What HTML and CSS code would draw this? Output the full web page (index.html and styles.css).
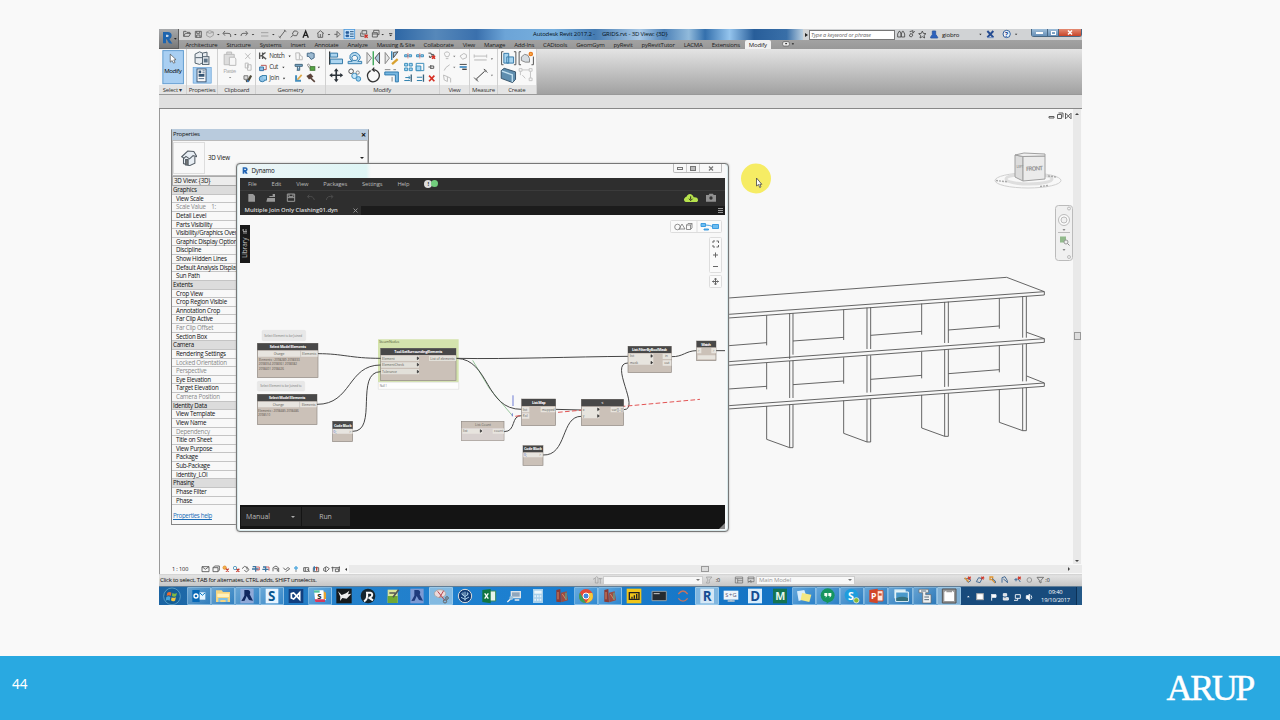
FILE: index.html
```html
<!DOCTYPE html>
<html lang="en">
<head>
<meta charset="utf-8">
<title>Slide 44</title>
<link rel="stylesheet" href="styles.css">
</head>
<body>
<main class="slide">
<section class="screen">
  <header class="app-head">
    <div class="app-button"><svg width="20" height="20" viewBox="12 12 60 58"><path d="M24 54V20h14q12 0 12 11q0 7-7 10l9 14-10-1-7-12h-2v12z" fill="#1d64ae"/><path d="M33 28h4q4 0 4 3.500t-4 3.500h-4z" fill="#c8d8e8"/><path d="M57 38h8l-4 5z" fill="#222"/></svg></div>
    <div class="head-rows">
      <div class="titlebar">
        <svg class="quick" width="216" height="11" viewBox="72 12 648 33" fill="none" stroke="#555" stroke-width="2.6">
          <path d="M86 34V19h7l3 3h8v4M86 34l5-9h16l-5 9zM121 19h18v18h-18zM125 19v6h9v-6M125 37v-7h10v7"/><path d="M164 17l11 4v10l-10 6-10-5V21zM155 21l9 4 11-4" stroke="#999"/><path d="M186 27h8l-4 4zM237 27h8l-4 4zM290 27h8l-4 4zM351 27h8l-4 4zM518 27h8l-4 4zM679 27h8l-4 4zM702 24h10v2h-10zM702 29h10l-5 5z" fill="#333" stroke="none"/>
          <path d="M210 18l-6 7 6 7M205 25h14q8 0 8 5v6M272 18l6 7-6 7M277 25h-13q-6 0-6 8"/><path d="M318 33h22M318 23h22" stroke="#999"/><path d="M374 38l16-21M371 34l6 5M387 15l7 5M407 37l8-7M417 18h8l4 5-4 9h-8l-5-5z"/><path d="M444 38l8-20 8 20M447 31h10" stroke="#222" stroke-width="4"/>
          <path d="M486 26l10-9 11 9M489 25v12h14V25M496 27v9M538 28h8M546 19l9 9-9 9z"/>
          <rect x="567" y="13" width="32" height="28" fill="#c6e2fa" stroke="#4b99dd"/><path d="M573 20h8v5h-8zM573 30h8v5h-8z" fill="#255b9a" stroke="#255b9a"/><path d="M585 20h11M585 27h11M585 34h11" stroke="#134675"/>
          <path d="M621 17h14v10h-14zM617 23v11h12M652 23v13h15V23zM656 21v-5h16v13h-5M652 27h15"/><path d="M629 29l9 9M638 29l-9 9" stroke="#d03028" stroke-width="4"/>
        </svg>
        <div class="caption"><span>Autodesk Revit 2017.2 -</span><span>GRIDS.rvt - 3D View: {3D}</span></div>
        <div class="info">
          <i class="tri-right"></i><div class="search">Type a keyword or phrase</div>
          <svg width="46" height="11" viewBox="1025 12 132 33" fill="none" stroke="#444" stroke-width="2.5"><path d="M1030 36V27l4-8h3l3 8v9zM1041 36V27l3-8h3l4 8v9zM1065 33l6 3 5-6-7-5zM1066 20l10-3-1 8M1081 18l-5 7M1104 18l3 7 8 1-6 5 2 8-7-4-7 4 2-8-6-5 8-1z"/><path d="M1134 18h10v10l6 9v2h-21v-3l5-7z" fill="#2c61bd" stroke="#2b59a2"/></svg>
          <span class="user">giobro</span>
          <svg class="help" width="44" height="11" viewBox="1270 12 132 33"><path d="M1274 26h7l-4 5zM1381 26h7l-4 5z" fill="#333"/><path d="M1298 18l18 19M1316 18l-18 19" stroke="#254c91" stroke-width="6"/><path d="M1299 38h18" stroke="#6f90c5" stroke-width="3"/><circle cx="1356" cy="27" r="11" fill="#eef4fb" stroke="#35629e" stroke-width="3"/><text x="1350" y="35" font-size="21" fill="#164890" font-weight="bold">?</text></svg>
        </div>
        <div class="winbuttons"><b class="wb-min"></b><b class="wb-max"><i></i></b><b class="wb-close"><svg width="6" height="5" viewBox="0 0 6 5"><path d="M1 .5l4 4M5 .5l-4 4" stroke="#fff" stroke-width="1.500"/></svg></b></div>
      </div>
      <nav class="tabs"><span>Architecture</span><span>Structure</span><span>Systems</span><span>Insert</span><span>Annotate</span><span>Analyze</span><span>Massing &amp; Site</span><span>Collaborate</span><span>View</span><span>Manage</span><span>Add-Ins</span><span>CADtools</span><span>GeomGym</span><span>pyRevit</span><span>pyRevitTutor</span><span>LACMA</span><span>Extensions</span><span class="active">Modify</span><svg width="13" height="8" viewBox="0 0 39 24"><rect x="2" y="5" width="20" height="13" rx="4" fill="#eee" stroke="#555" stroke-width="2"/><path d="M9 9h7l-4 5zM29 10h7l-3 5z" fill="#222"/></svg></nav>
    </div>
  </header>

  <div class="ribbon">
    <div class="panel p-select"><svg viewBox="12 76 83 108"><rect x="24" y="79" width="64" height="103" fill="#a9cff2" stroke="#5f9bd0" stroke-width="3"/><path d="M47 90v25l6-5 4 8 5-2-4-8 7-1z" fill="#fff" stroke="#444" stroke-width="2"/><text x="28" y="150" textLength="55">Modify</text></svg><label>Select ▾</label></div>
    <div class="panel p-prop"><svg viewBox="95 76 95 108"><g fill="#e9edf1" stroke="#52606c" stroke-width="3"><path d="M120 90l14-7 9 4v30l-9 5-14-4zM143 87l14-3v36l-14-3M121 101h34"/><rect x="143" y="98" width="20" height="24"/></g><path d="M147 104h12v12h-12z" fill="#607487"/><rect x="114" y="132" width="56" height="48" fill="#a9d0f2" stroke="#5b9bd6" stroke-width="2"/><rect x="126" y="136" width="28" height="40" fill="#f8f8f8" stroke="#3d5878" stroke-width="3"/><path d="M131 141h8v8h-8zM131 152h18v8h-18z" fill="#365675"/><path d="M143 142h7M143 148h7M131 166h17" stroke="#53708e" stroke-width="3"/></svg><label>Properties</label></div>
    <div class="panel p-clip"><svg viewBox="190 76 114 108" fill="none" stroke="#bbb" stroke-width="3"><path d="M209 91h31v32h-31zM217 91v-7h15v7" fill="#ddd"/><path d="M225 100h16l4 5v20h-20z" fill="#f6f6f6"/><text x="206" y="150" textLength="40" fill="#aaa" stroke="none">Paste</text><path d="M224 161h7l-4 4z" fill="#777" stroke="none"/><path d="M274 88l15 17M290 88l-16 17M274 118h9v15h-9zM281 123h11v17h-11z"/><path d="M270 157h12v11h-12z" fill="#ddd" stroke="#777"/><path d="M276 174l8-3 8-15" stroke="#4f4a39" stroke-width="7"/><path d="M280 170l4 6" stroke="#3875b7" stroke-width="5"/></svg><label>Clipboard</label></div>
    <div class="panel p-geo"><svg viewBox="304 76 208 108" fill="none" stroke-width="3"><path d="M315 86v20M324 86v20M333 86l-12 9 14 11M313 96h9" stroke="#555" stroke-width="4"/><g fill="#333"><text x="344" y="102" textLength="48">Notch</text><text x="344" y="136" textLength="28">Cut</text><text x="344" y="170" textLength="31">Join</text><path d="M403 95h7l-4 5zM384 129h7l-4 5zM386 163h7l-4 5zM492 129h7l-4 5z"/></g><path d="M315 130h12v11h-12z" fill="#8fc1e8" stroke="#3774a7"/><path d="M319 125h16v13h-8" stroke="#b55656"/><circle cx="323" cy="166" r="9" fill="#8cc0e5" stroke="#367eac"/><path d="M322 156h14v14h-7" fill="#9ed0ee" stroke="#367eac"/><path d="M425 87h11l4 9 5 2v10h-19zM436 87v20" stroke="#bbb"/><path d="M460 88h8l3-2 10 3v13l-9 5-7-9h-5z" fill="#9bb9d0" stroke="#476b89"/><path d="M423 122h22v6h-22zM430 128v11M437 128v12h-9" fill="#7bacd0" stroke="#46687c"/><path d="M461 125q0-8 7 0l6 7-6 3z" stroke="#888"/><rect x="469" y="129" width="14" height="11" fill="#56a845" stroke="#477a39"/><path d="M426 155v17h15" stroke="#448ebd" stroke-width="6"/><path d="M430 169l13-15" stroke="#dda94b" stroke-width="5"/><path d="M461 158l9-5 5 6-9 6zM470 163l13 12" fill="#633" stroke="#5c463d" stroke-width="5"/></svg><label>Geometry</label></div>
    <div class="panel p-mod"><svg viewBox="512 76 342 108" fill="none" stroke="#555" stroke-width="3"><path d="M523 83v40" stroke="#333" stroke-width="4"/><path d="M525 88h22v12h-22zM525 106h37v14h-37z" fill="#acd5f0" stroke="#3679a6"/><path d="M579 120h41v-7h-12q12-9 5-19-6-9-14-8-10 0-14 9-4 11 6 18h-12z" fill="#b5d9ef" stroke="#377eaf"/><path d="M592 110q-5-10 3-15 9-3 12 5 2 6-3 10z" fill="#f8f8f8" stroke="#377eaf"/>
      <path d="M636 86l14 17-14 17z" fill="#e8e8e8" stroke="#888"/><path d="M674 86l-14 17 14 17z" fill="#abc6da"/><path d="M655 82v43" stroke="#31a24d" stroke-width="4"/><path d="M691 86l13 17-13 17z" fill="#e8e8e8" stroke="#888"/><path d="M730 84l-14 18v-16z" fill="#a0c6e0"/><path d="M711 82v27" stroke="#287aad" stroke-width="4"/><path d="M712 121l17-15" stroke="#d9a12e" stroke-width="7"/>
      <g fill="#a7d8f5" stroke="#3f90bc"><path d="M750 93h8v6h-8zM763 93h8v6h-8zM786 93h8v6h-8zM799 93h8v6h-8zM750 119h9v8h-9zM764 119h9v8h-9zM750 133h9v8h-9zM764 133h9v8h-9z"/><path d="M785 119h23v22h-23z" fill="#f8f8f8"/><path d="M785 127h14v14h-14z"/></g><path d="M760 88v16M796 88v16" stroke="#d4433a" stroke-width="2"/><path d="M822 88h8v4h8v5h-8v4h-5v-5"/><path d="M833 96l9 9M842 96l-9 9M824 156l16 17M840 156l-16 17" stroke="#d63024" stroke-width="5"/><path d="M822 130h7M829 124v12M829 127h9v7h-9"/>
      <path d="M527 155h33M543 139v32" stroke="#2c333a" stroke-width="5"/><path d="M522 155l9-7v14zM564 155l-9-7v14zM543 134l-7 9h14zM543 176l-7-9h14z" fill="#2c333a" stroke="none"/><circle cx="588" cy="143" r="7"/><circle cx="608" cy="147" r="5" stroke="#888"/><circle cx="598" cy="157" r="8" fill="#c8e7fa" stroke="#3e8ebe"/><circle cx="610" cy="166" r="7" fill="#9cd0ef" stroke="#3e8ebe"/><path d="M647 141q-15 10-7 25 8 13 22 7 14-8 11-22-5-13-20-13l5-6M653 138l6 6" stroke="#333" stroke-width="4"/><path d="M690 145h41v30h-9v-21h-32z" fill="#79b8e1" stroke="#2e79ae"/><path d="M690 138h17M716 138h8M712 160v14" stroke="#888"/><path d="M770 153v22M807 153v22" stroke="#3a637c" stroke-width="4"/><path d="M749 171h17M752 162h13M787 161h16M787 171h16M762 158l5 4-5 4" stroke="#2d80ad"/></svg><label>Modify</label></div>
    <div class="panel p-view"><svg viewBox="854 76 92 108" fill="none" stroke="#bbb" stroke-width="3"><path d="M872 98q-10-14 4-15 13 2 4 15zM872 104h8M916 96l12-8 8 4v9l-12 5zM865 155l12 5v15l-10-5zM877 160l10 5v13M867 141l5-9 12-9"/><path d="M895 95h7l-4 5zM895 129h7l-4 5z" fill="#777" stroke="none"/><path d="M915 122h22" stroke="#444"/><path d="M915 130h22" stroke="#3182bd" stroke-width="5"/><path d="M923 137h14" stroke="#333" stroke-width="4"/></svg><label>View</label></div>
    <div class="panel p-meas"><svg viewBox="946 76 82 108" fill="none" stroke="#bbb" stroke-width="3"><path d="M959 96h39M959 91v10M998 91v10"/><path d="M959 108h39" stroke-width="5" stroke="#d0d0d0"/><path d="M1011 103h7l-4 5zM1011 154h7l-4 5z" fill="#777" stroke="none"/><path d="M965 168l29-27M959 163l12 12M989 136l11 11" stroke="#333"/><circle cx="966" cy="168" r="3" fill="#333"/><circle cx="994" cy="142" r="3" fill="#333"/></svg><label>Measure</label></div>
    <div class="panel p-create"><svg viewBox="1028 76 118 108" fill="none" stroke="#555" stroke-width="3"><path d="M1045 83h-6v40h6M1077 83h6v40h-6M1099 83h-6v40h6M1131 123h6V98"/><path d="M1046 88h15v30h-15zM1055 99h21v19h-21z" fill="#a8d5f0" stroke="#397ba9"/><path d="M1100 99l10-8 10 3 5 10v11h-13l-12-5z" fill="#d6dce1" stroke="#888"/><circle cx="1129" cy="90" r="5" fill="#f9b24f" stroke="#e87a20" stroke-width="4"/><path d="M1038 141l9-7 35 11v23l-9 10-35-13z" fill="#5f8eaf" stroke="#35536c"/><path d="M1040 143l32 11v22" stroke="#c4e2f2" stroke-width="4"/><path d="M1093 135h9v8h-9zM1124 135h9v8h-9zM1124 164h9v8h-9zM1102 139h22M1128 143v21M1097 143v12M1103 155l9 10" stroke="#c4c4c4"/></svg><label>Create</label></div>
  </div>
  <div class="option-strip"></div>

  <div class="workarea">
    <svg class="model" viewBox="160 109 913 455" width="913" height="455">
      <g fill="none" stroke="#606060" stroke-width="1"><path d="M1049 116.500h5v1.500h-5zM1057.500 114.500h4v4h-4zM1058.500 113h4.500v4.500M1066 113.500l4.500 5M1070.500 113.500l-4.500 5M1065.500 113v6M1071 113v6"/></g>
      <g transform="translate(720 270) scale(.333333)" fill="none" stroke="#555" stroke-width="2.7">
        <path d="M26 84L860 22 973 65V75L26 144M26 133L973 65M26 275L973 206V217L26 286M920 187L973 206M26 407L973 339V349L26 417M920 318L973 339"/>
        <path d="M140 136V226M26 227L140 218M209 131V267M219 130V254M371 119V210M219 213L371 202M441 113V237M452 112V237M605 101V194M452 196L605 184M674 96V219M685 95V219M838 85V176M685 180L838 168M908 80V203M919 79V203"/>
        <path d="M140 279V358M26 357L140 349M209 273V384M219 272V384M371 262V341M219 344L371 333M441 257V368M452 256V367M605 245V325M452 328L605 316M674 239V351M685 238V350M838 227V307M685 311L838 299M908 223V334M919 222V334"/>
        <path d="M140 408V508L209 533H219V404M209 404V533M371 392V490L441 516H452V387M441 388V516M605 375V474L674 499H685V370M674 371V499M838 359V457L908 482H919V353M908 354V482"/>
      </g>
      <g fill="none" stroke="#d0d0d0"><ellipse cx="1028" cy="180.500" rx="33" ry="7.500" stroke-width="1"/><ellipse cx="1029" cy="179" rx="23" ry="5" stroke="#dedede" stroke-width="3"/><path d="M996 180.500l12 1.500M1048 176l9 1M1040 186.500l8-1" stroke="#aaa" stroke-dasharray="2 1" stroke-width="1.500"/></g>
      <g stroke="#a0a0a0" stroke-width="1"><path d="M1015 155l8 1.500V181l-8-4z" fill="#dcdcdc"/><path d="M1023 156.500l22-.5v23l-22 2z" fill="#ebebeb"/><path d="M1015 155l9-2 21 1v2l-22 .5z" fill="#f0f0f0"/></g>
      <text x="1026" y="170.500" class="cube" textLength="17" transform="rotate(-3 1034 169)">FRONT</text><text x="1016.500" y="168" class="cube small">LEFT</text>
      <g fill="#f0f0f0" stroke="#bbb"><rect x="1055.500" y="205.500" width="17" height="55" rx="3"/><circle cx="1064" cy="220" r="5.500" fill="#fafafa"/><circle cx="1064" cy="220" r="3"/><circle cx="1069" cy="208.500" r="1.500"/><circle cx="1069" cy="257" r="1.500"/><path d="M1058 232.500h12"/></g><path d="M1060 236.500h6v6h-6z" fill="#91b98b"/><circle cx="1066" cy="242" r="2" fill="#eee" stroke="#888" stroke-width=".8"/><path d="M1067.500 243.500l2 2" stroke="#888"/><path d="M1062.500 229h3l-1.500 2zM1062.500 249h3l-1.500 2z" fill="#888"/>
      <circle cx="756" cy="178.500" r="15" fill="#f6ec64"/><path d="M756.500 178v8l2-1.500 1.200 3 1.300-.7-1.200-2.500h2z" fill="#fff" stroke="#444" stroke-width=".8"/>
    </svg>
    <div class="vscroll"><i class="up"></i><i class="thumb"></i><i class="down"></i></div>

    <aside class="palette">
      <div class="pal-head"><span>Properties</span><b>×</b></div>
      <div class="pal-type"><div class="thumb-box"><svg width="16" height="16" viewBox="50 75 45 45" fill="#e8eef4" stroke="#555e66" stroke-width="3"><path d="M57 96v17l17 6 15-7V94"/><path d="M52 94l17-16 17 1 9 15-11-3-10 9-10-7-5 5z"/><path d="M63 102h7v15h-7z" fill="#777"/></svg></div><span>3D View</span><i></i></div>
      <div class="pal-sel">3D View: {3D}</div>
      <ul class="rows"><li class="group">Graphics</li><li>View Scale</li><li class="off">Scale Value&nbsp; &nbsp; 1:</li><li>Detail Level</li><li>Parts Visibility</li><li>Visibility/Graphics Over</li><li>Graphic Display Options</li><li>Discipline</li><li>Show Hidden Lines</li><li>Default Analysis Display</li><li>Sun Path</li><li class="group">Extents</li><li>Crop View</li><li>Crop Region Visible</li><li>Annotation Crop</li><li>Far Clip Active</li><li class="off">Far Clip Offset</li><li>Section Box</li><li class="group">Camera</li><li>Rendering Settings</li><li class="off">Locked Orientation</li><li class="off">Perspective</li><li>Eye Elevation</li><li>Target Elevation</li><li class="off">Camera Position</li><li class="group">Identity Data</li><li>View Template</li><li>View Name</li><li class="off">Dependency</li><li>Title on Sheet</li><li>View Purpose</li><li>Package</li><li>Sub-Package</li><li>Identity_LOI</li><li class="group">Phasing</li><li>Phase Filter</li><li>Phase</li></ul>
      <a class="pal-help">Properties help</a>
    </aside>

    <section class="dynamo">
      <div class="dy-title"><svg width="6" height="7" viewBox="0 0 18 21"><path d="M2 20V1h8q7 0 7 6 0 4-4 6l4 7h-6l-4-6v6z" fill="#2265b4"/><path d="M7 5h3q2 0 2 2t-2 2H7z" fill="#fff"/></svg><span>Dynamo</span>
        <div class="dy-win"><i><u class="m"></u></i><i><u class="r"></u></i><i><svg width="6" height="5" viewBox="0 0 6 5"><path d="M1 .5l4 4M5 .5l-4 4" stroke="#777" stroke-width="1.300"/></svg></i></div></div>
      <div class="dy-body">
        <div class="dy-menu"><span>File</span><span>Edit</span><span>View</span><span>Packages</span><span>Settings</span><span>Help</span><b>!</b><em></em></div>
        <div class="dy-tools"><svg width="485" height="15" viewBox="15 92 1455 45"><path d="M40 101h14l6 6v17H40zM97 113h23v11H94zM103 107h10v-6h7v9h-17z" fill="#999"/><path d="M157 101h22v22h-22zM162 101v8h12v-8M157 112h22" fill="none" stroke="#999" stroke-width="3"/><path d="M223 103l-6 6 6 5M218 109q17-4 20 10M288 103l6 6-6 5M293 109q-17-4-19 10" fill="none" stroke="#4b4b4b" stroke-width="3"/><path d="M1350 124q-7-6 1-13 5-2 6-6 9-8 17 1l2 5q14-1 13 10l-3 4h-33z" fill="#b7e34d"/><path d="M1367 108v10M1362 115l5 6 6-6" stroke="#303018" stroke-width="3" fill="none"/><path d="M1413 104h8l2-4h11l2 4h7v20h-30z" fill="#909090"/><circle cx="1428" cy="113" r="5" fill="#333"/></svg></div>
        <div class="dy-tabs"><div class="dy-tab"><span>Multiple Join Only Clashing01.dyn</span><svg width="5" height="5" viewBox="0 0 5 5"><path d="M.5 .5l4 4M4.500 .5l-4 4" stroke="#999" stroke-width=".9"/></svg></div><i></i></div>
        <div class="dy-space">
          <svg class="graph" width="485" height="290" viewBox="240 215 485 290">
            <g fill="#fafafa" stroke="#ddd"><rect x="670.500" y="220.500" width="51" height="12" rx="1"/><rect x="709.500" y="237.500" width="12" height="35" rx="1"/><rect x="709.500" y="275.500" width="12" height="12" rx="1"/><path d="M697 221v11"/></g>
            <g fill="none" stroke="#777" stroke-width=".8"><circle cx="677.500" cy="227" r="2.800"/><path d="M679 229l3-5 3 5zM686.500 225h4v4.500h-4zM686.500 225l1.500-1.500h4v4.500l-1.500 1.500M690.500 225l1.500-1.500"/></g>
            <g fill="#6fbdf0" stroke="#3095df" stroke-width=".9"><path d="M701 223.500h4.500v3h-4.500zM712.500 224.500h6v4h-6zM704 229h4.500v1h-4.500z"/><path d="M705.500 225q4 0 7 1.500" fill="none"/></g>
            <path d="M713 243v-2h2M716.500 241h2v2M718.500 245v2h-2M715 247h-2v-2M713 255h5M715.500 252.500v5M713 266.500h5M712.500 281.500h6M715.500 278.500v6M714.500 279.500l1-1.500 1 1.500M714.500 283.500l1 1.500 1-1.500M713.500 280.500l-1 1 1 1M717.500 280.500l1 1-1 1" fill="none" stroke="#666"/>
            <g transform="translate(250 325) scale(.333333)">
              <g class="note"><rect x="36" y="16" width="131" height="31" rx="4"/><rect x="22" y="169" width="142" height="29" rx="4"/></g>
              <g class="tiny"><text x="43" y="35" textLength="113">Select Element to be Joined</text><text x="31" y="187" textLength="124">Select Element to be Joined to</text></g>
              <g class="node"><rect x="22" y="55" width="182" height="103"/><rect x="22" y="208" width="179" height="91"/><rect x="248" y="289" width="60" height="61"/></g>
              <path d="M22 55h182v21H22zM22 208h179v21H22zM248 289h60v22h-60z" fill="#484848"/>
              <path d="M24 77h128v18H24zM24 230h125v17H24zM153 77h50v18h-50zM150 230h50v17h-50zM248 312h60v14h-60z" fill="#e7e4df"/><path d="M152 77v18M149 230v17" stroke="#aaa"/>
              <g class="head"><text x="59" y="70" textLength="109">Select Model Elements</text><text x="57" y="223" textLength="109">Select Model Elements</text><text x="252" y="305" textLength="53">Code Block</text></g>
              <g class="port"><text x="71" y="91" textLength="32">Change</text><text x="68" y="243" textLength="34">Change</text><text x="156" y="90" textLength="43">Elements</text><text x="155" y="243" textLength="42">Elements</text></g><text x="250" y="323" font-size="11" fill="#4d6dc4">0;</text><text x="298" y="323" font-size="11" fill="#555">&gt;</text>
              <g class="tiny dark"><text x="26" y="108" textLength="123">Elements : 2098289 2098333</text><text x="26" y="121" textLength="115">2098354 2098361 2098382</text><text x="26" y="134" textLength="76">2098401 2098426</text><text x="24" y="261" textLength="122">Elements : 2098485 2098486</text><text x="24" y="274" textLength="37">2098510</text></g>
              <path d="M384 43h242v129H384z" fill="#d4e3ad"/><path d="M385 172h241v21H385z" fill="#fdfdfd" stroke="#e0e0e0" stroke-width="2"/><text x="387" y="53" font-size="11" fill="#59643f" textLength="61">SteamNodes</text><text class="tiny" x="389" y="186" textLength="22">Null 1</text>
              <rect x="392" y="70" width="226" height="97" class="node"/><path d="M392 70h226v20H392z" fill="#484848"/><path d="M393 92h114v16H393zM393 112h114v16H393zM393 132h114v16H393zM537 92h81v16h-81z" fill="#e2e0d9"/><text class="headone" x="433" y="84" textLength="144">Tool.GetSurroundingElements</text>
              <g class="port"><text x="396" y="104" textLength="38">Element</text><text x="396" y="123" textLength="66">ElementCheck</text><text x="396" y="143" textLength="45">Tolerance</text><text x="541" y="104" textLength="73">List of elements</text></g><path d="M502 96l5 4-5 4zM502 115l5 4-5 4zM502 136l5 4-5 4z" fill="#333" stroke="#333" stroke-width="2"/>
              <path class="wire" d="M204 86C280 86 300 100 392 100M201 238C306 238 292 120 392 120M308 319C385 320 313 141 392 140"/>
            </g>
            <g transform="translate(450 335) scale(.333333)">
              <path d="M68 76L118 160 188 243" fill="none" stroke="#6ab06f" stroke-width="2"/><path d="M189 181v32M187 235v9" stroke="#6d7bd5" stroke-width="3"/>
              <path class="wire" d="M20 70C120 74 104 224 215 223M20 70C180 73 370 65 534 64M162 290C200 290 181 241 215 242M316 223L394 225M279 360C352 363 332 243 394 244M521 224C574 224 475 84 534 84M664 65C700 66 707 47 740 47M798 47H830"/>
              <path d="M196 244L215 241M324 232L750 193" stroke="#e25353" stroke-width="3" stroke-dasharray="14 7"/>
              <g class="node"><rect x="34" y="259" width="128" height="58"/><rect x="215" y="192" width="102" height="80"/><rect x="394" y="193" width="127" height="79"/><rect x="219" y="332" width="60" height="59"/><rect x="534" y="34" width="130" height="79"/><rect x="740" y="18" width="58" height="59"/></g><path d="M35 279h126v37H35z" fill="#d8d1cf"/>
              <path d="M215 192h102v21H215zM394 193h127v21H394zM219 332h60v20h-60zM534 34h130v20H534zM740 18h58v19h-58z" fill="#484848"/>
              <path d="M37 281h60v15H37zM128 281h34v15h-34zM216 216h22v16h-22zM216 235h22v16h-22zM272 216h44v16h-44zM396 216h52v34h-52zM482 216h39v16h-39zM220 353h58v14h-58zM536 56h74v33h-74zM638 56h26v16h-26zM638 76h26v16h-26zM741 39h13v16h-13zM784 39h14v16h-14zM743 61h53v12h-53z" fill="#e7e4de"/>
              <g class="head"><text x="246" y="207" textLength="41">List.Map</text><text x="454" y="206">&lt;</text><text x="222" y="346" textLength="54">Code Block</text><text x="546" y="49" textLength="105">List.FilterByBoolMask</text><text x="754" y="32" textLength="29">Watch</text></g>
              <g class="port"><text x="75" y="273" textLength="48">List.Count</text><text x="39" y="292">list</text><text x="132" y="292" textLength="28">count</text><text x="218" y="227">list</text><text x="218" y="246" textLength="15">f(x)</text><text x="275" y="227" textLength="39">mapped</text><text x="398" y="227">x</text><text x="398" y="246">y</text><text x="485" y="227" textLength="34">var[]..[]</text><text x="539" y="67">list</text><text x="539" y="87" textLength="25">mask</text><text x="645" y="67">in</text><text x="643" y="87">out</text><text x="743" y="50">&gt;</text><text x="788" y="50">&gt;</text><text x="268" y="363">&gt;</text></g><text x="221" y="363" font-size="11" fill="#4d6dc4">0;</text>
              <path d="M91 284l5 4-5 4zM443 219l5 4-5 4zM443 239l5 4-5 4zM603 59l5 4-5 4zM603 79l5 4-5 4z" fill="#333" stroke="#333" stroke-width="2"/>
            </g>
          </svg>
          <div class="library"><span>Library</span><svg width="8" height="5" viewBox="0 0 8 5"><path d="M2 1h4M2 2.500h4M2 4h2M5 3l1.500 1L5 5" stroke="#ccc" stroke-width=".7" fill="none"/></svg></div>
        </div>
        <div class="dy-run"><div class="mode"><span>Manual</span><i></i></div><div class="run">Run</div><svg width="6" height="6" viewBox="0 0 6 6"><path d="M0 6L6 0v6z" fill="#888"/></svg></div>
      </div>
    </section>
  </div>

  <div class="viewbar"><span>1 : 100</span>
    <svg width="150" height="10" viewBox="120 9 450 30" fill="none" stroke="#555" stroke-width="2.600"><path d="M129 17h21v15h-21zM129 17l10 8 11-8M162 20h15v12h-15zM162 20l5-5h14v12l-4 5"/><circle cx="197" cy="20" r="5" fill="#f4b44b" stroke="#e28b2d"/><path d="M201 23l8 9M209 23l-8 9M232 23l9 9M241 23l-9 9" stroke="#c43a2d" stroke-width="4"/><circle cx="228" cy="21" r="5" stroke="#4b94bb"/><path d="M249 23l8-7 8 4 5 6-8 7-6-6M264 17v9M373 20l6 7 8-8 5 5-12 8"/><path d="M281 17h9v15M279 24h20M312 18h8v14M310 25h19" stroke="#3c75a1" stroke-width="4"/><path d="M292 18h9v9h-9M321 18h9v11" stroke="#c55"/><path d="M342 31V20l9-5 8 6v12M346 23h9v8"/><path d="M411 26v7" stroke="#777"/><circle cx="411" cy="21" r="4" fill="#7cc4ee" stroke="#45a0d8"/><path d="M434 20h15v11h-15zM439 20v11M445 24l7 8M463 20h16v12h-16zM494 22l8-5 9 6-9 9-8-3zM500 18v14M521 17v15M517 20h26M541 16v16M529 24h10v8h-10z"/><path d="M466 16v13" stroke="#347ab4" stroke-width="4"/><path d="M473 17v12" stroke="#bd4338" stroke-width="4"/><path d="M564 21v9l-6-5z" fill="#333" stroke="none"/></svg>
    <div class="hscroll"><i></i><b></b></div></div>
  <div class="status"><p>Click to select, TAB for alternates, CTRL adds, SHIFT unselects.</p>
    <svg width="11" height="10" viewBox="0 0 33 30" fill="none" stroke="#999" stroke-width="2"><path d="M10 8v16h8V8q-4-6-8 0zM3 13l6-3M25 26V11h-5M22 11h9"/></svg><div class="box b1"><i></i></div>
    <svg width="31" height="10" viewBox="343 46 93 30"><path d="M353 52h17l-8 9v9h-9l5-9z" fill="#d6d6d6" stroke="#999" stroke-width="2"/><text x="381" y="67" font-size="16" fill="#222">:0</text></svg>
    <svg width="21" height="10" viewBox="425 46 63 30" fill="none" stroke="#666" stroke-width="2"><path d="M429 52h22v18h-22zM429 57h22M436 57v13M436 63h15M467 52h18v14h-18zM467 57h18M466 69l10-7v8"/></svg><div class="box b2">Main Model<i></i></div>
    <svg class="sel" width="92" height="10" viewBox="1116 46 276 30" fill="none" stroke="#496f98" stroke-width="3"><path d="M1123 57h12l8 5-8 6-6-5M1159 66l7-12 10 3-6 12zM1236 69V54l9-3 7 12v7M1273 60h10M1278 55v10M1284 57l7 10"/><path d="M1134 51l8 8M1142 51l-8 8M1174 51l8 8M1182 51l-8 8M1284 51l8 8M1292 51l-8 8" stroke="#d23b2c" stroke-width="4"/><path d="M1124 54l12 12M1200 52h8v8h-8zM1207 61l9 9" stroke="#e19532" stroke-width="4"/><path d="M1206 57l10 7v6M1240 58l13 10"/><circle cx="1318" cy="61" r="7" stroke="#999"/><path d="M1341 53h20l-8 9v8l-5-3v-5z" stroke="#777"/><text x="1366" y="67" font-size="16" fill="#222" stroke="none">:0</text></svg>
  </div>

  <footer class="taskbar">
    <div class="start"><svg width="20" height="19" viewBox="0 0 60 57"><circle cx="30" cy="28" r="25" fill="#145d96" stroke="#72b5d4" stroke-width="2"/><path d="M16 17q7-4 12 0l-2 10q-6-4-12 0z" fill="#e96b31"/><path d="M31 18q7 4 14 0l-3 10q-6 3-12-1z" fill="#80b941"/><path d="M13 30q7-4 12 0l-2 11q-6-4-12 0z" fill="#45a7dd"/><path d="M29 31q6 3 13 0l-3 10q-7 4-12-1z" fill="#f5c43d"/></svg></div>
    <div class="tasks">
      <i class="open"><svg viewBox="0 0 48 48"><path d="M4 6h22v36H4z" fill="#0768b6"/><path d="M26 13h17v22H26z" fill="#e7f5ff"/><path d="M27 15l7 7 8-7" stroke="#0879c5" stroke-width="3" fill="none"/><circle cx="15" cy="24" r="6" fill="none" stroke="#fff" stroke-width="4"/></svg></i>
      <i class="open"><svg viewBox="0 0 48 48"><path d="M3 7h17l4 5h21v30H3z" fill="#f5d580"/><path d="M7 17h35v10H7z" fill="#fff2bb"/><path d="M10 42V30h28v12h-6v-6H16v6z" fill="#7fc1e5"/></svg></i>
      <i class="open"><svg viewBox="0 0 48 48"><path d="M4 2h40v44H4z" fill="#8fa9d8"/><path d="M16 6h12q9 4 4 13l10 19-12-2-7-12-6 14-10 1 9-16z" fill="#10275f"/></svg></i>
      <i class="open"><svg viewBox="0 0 48 48"><path d="M5 2h38v44H5z" fill="#e7f4ff"/><text x="12" y="39" class="ico" fill="#07558e">S</text></svg></i>
      <i><svg viewBox="0 0 48 48"><path d="M2 3h44v42H2z" fill="#123f7e"/><path d="M10 17l7-2 18 19V14L17 33l-7-3z" fill="none" stroke="#fff" stroke-width="5"/></svg></i>
      <i class="open"><svg viewBox="0 0 48 48"><path d="M6 7h28l8 29-32 6z" fill="#fff"/><path d="M6 7h17v7H6z" fill="#51c1a1"/><path d="M35 10l7 4v19h-7z" fill="#e7a230"/><path d="M8 34h31v8H10z" fill="#d6395c"/><text x="16" y="32" font-size="26" font-weight="bold" fill="#333">s</text></svg></i>
      <i><svg viewBox="0 0 48 48"><path d="M1 2h46v44H1z" fill="#171b1d"/><path d="M6 10l11 11 13-5 10-8-4 11 10-2-14 15-13-2-7 9 1-13z" fill="#eee"/></svg></i>
      <i><svg viewBox="0 0 48 48"><circle cx="24" cy="24" r="22" fill="#15252e"/><path d="M12 40q12-6 9-26h10q9 3 4 11-4 5-10 4M27 29l12 8" fill="none" stroke="#f7f7f7" stroke-width="6"/></svg></i>
      <i><svg viewBox="0 0 48 48"><path d="M8 5h30v40H8z" fill="#dbe49a"/><path d="M8 24h30v21H8z" fill="#71a934"/><path d="M13 15h18M24 28l17-23" stroke="#555" stroke-width="5"/></svg></i>
      <i><svg viewBox="0 0 48 48"><path d="M4 2h40v44H4z" fill="#7c9ad4"/><path d="M16 6h12q9 4 4 13l10 19-12-2-7-12-6 14-10 1 9-16z" fill="#1f3b7c"/></svg></i>
      <i class="open hot"><svg viewBox="0 0 48 48"><ellipse cx="21" cy="17" rx="17" ry="12" fill="#ecd9da" stroke="#aaa" stroke-width="3"/><path d="M14 10l22 28M32 8L20 28" stroke="#b5454e" stroke-width="3"/><circle cx="36" cy="40" r="5" fill="none" stroke="#666" stroke-width="3"/><circle cx="42" cy="30" r="4" fill="none" stroke="#666" stroke-width="3"/></svg></i>
      <i><svg viewBox="0 0 48 48"><circle cx="24" cy="24" r="20" fill="#123c75" stroke="#ddd" stroke-width="3"/><path d="M24 38V11M13 17l11 9 11-9M12 28l12 6 12-7M18 13v9M31 13v9" stroke="#abcfe8" stroke-width="3" fill="none"/></svg></i>
      <i><svg viewBox="0 0 48 48"><path d="M26 9h18v30H26z" fill="#e8f3eb" stroke="#39895a" stroke-width="3"/><path d="M4 6l25-3v43L4 42z" fill="#117641"/><path d="M11 16l11 16M22 16L11 32" stroke="#fff" stroke-width="4"/></svg></i>
      <i><svg viewBox="0 0 48 48"><path d="M14 9h31v22H14z" fill="#dbe3e9"/><path d="M18 13h23v13H18z" fill="#8ea6bd"/><circle cx="16" cy="30" r="6" fill="#9cc3dd"/><path d="M4 42l9-8M26 36h14" stroke="#eee" stroke-width="4"/></svg></i>
      <i><svg viewBox="0 0 48 48"><path d="M9 3h30v42H9z" fill="#a9d0ea"/><path d="M13 8h22v9H13z" fill="#edf7fb"/><path d="M13 25h22M13 35h22" stroke="#e2f0fb" stroke-width="6" stroke-dasharray="5 3"/></svg></i>
      <i><svg viewBox="0 0 48 48"><path d="M7 6l12-3 2 40-14-2z" fill="#8a3b36"/><path d="M21 14l17-4 4 27-20 6z" fill="#9d4c41"/><path d="M12 12v22M25 18l12 18" stroke="#d08a67" stroke-width="3"/><path d="M36 14v20" stroke="#5ca48f" stroke-width="4"/></svg></i>
      <i class="open"><svg viewBox="0 0 48 48"><circle cx="24" cy="24" r="21" fill="#e24a37"/><path d="M6 14l10 18 8 13Q3 45 3 24q0-6 3-10z" fill="#37a458"/><path d="M43 15q8 25-19 30l11-17-5-13z" fill="#f4ca3c"/><circle cx="24" cy="24" r="9" fill="#4289de" stroke="#fff" stroke-width="3"/></svg></i>
      <i class="open"><svg viewBox="0 0 48 48"><path d="M7 6l12-3 2 40-14-2z" fill="#8a3b36"/><path d="M21 14l17-4 4 27-20 6z" fill="#9d4c41"/><path d="M12 12v22M25 18l12 18" stroke="#d08a67" stroke-width="3"/><path d="M36 14v20" stroke="#5ca48f" stroke-width="4"/></svg></i>
      <i><svg viewBox="0 0 48 48"><path d="M2 2h44v44H2z" fill="#f1c61a"/><path d="M10 14h29v20H10z" fill="none" stroke="#222" stroke-width="4"/><path d="M18 32v-6M25 32V22M32 32V18" stroke="#222" stroke-width="4"/></svg></i>
      <i><svg viewBox="0 0 48 48"><path d="M3 10h43v28H3z" fill="#252b30" stroke="#919da4" stroke-width="3"/><path d="M8 17h18" stroke="#ccc" stroke-width="3"/></svg></i>
      <i><svg viewBox="0 0 48 48"><path d="M10 18q14-18 28 0M10 31q14 17 28 0" stroke="#c8745d" stroke-width="4" fill="none"/></svg></i>
      <i class="open hot"><svg viewBox="0 0 48 48"><path d="M4 2h41v44H4z" fill="#d5e7f5"/><text x="11" y="39" class="ico" fill="#174f94">R</text></svg></i>
      <i><svg viewBox="0 0 48 48"><path d="M2 8h44v27H2z" fill="#eef4fa"/><text x="7" y="27" font-size="17" fill="#557" textLength="34">S+G</text><path d="M14 39h21M24 34v6" stroke="#c1c9d1" stroke-width="4"/></svg></i>
      <i><svg viewBox="0 0 48 48"><path d="M3 2h42v44H3z" fill="#d8edfc"/><text x="10" y="39" class="ico" fill="#154c91">D</text></svg></i>
      <i><svg viewBox="0 0 48 48"><path d="M3 2h42v44H3z" fill="#157451"/><text x="10" y="36" class="ico sm" fill="#e3f6ed">M</text></svg></i>
      <i class="open"><svg viewBox="0 0 48 48"><path d="M3 10l22-4 8 25-25 8z" fill="#d8edfb"/><path d="M18 15l28 5-6 22-26-6z" fill="#f3e882"/></svg></i>
      <i class="open"><svg viewBox="0 0 48 48"><circle cx="23" cy="22" r="21" fill="#169560"/><path d="M20 40v8l14-12z" fill="#169560"/><path d="M13 15h9v8l-5 6v-5h-4zM25 15h9v8l-5 6v-5h-4z" fill="#f4fff8"/></svg></i>
      <i class="open"><svg viewBox="0 0 48 48"><circle cx="22" cy="22" r="20" fill="#1e9ddd"/><text x="12" y="35" class="ico sm" fill="#fff">S</text><circle cx="37" cy="37" r="8" fill="#89b936" stroke="#fff" stroke-width="2"/></svg></i>
      <i class="open"><svg viewBox="0 0 48 48"><path d="M23 8h22v31H23z" fill="#ffe7dd" stroke="#d34e2e" stroke-width="3"/><path d="M32 16h9v7h-9z" fill="#d34e2e"/><path d="M4 6l25-4v44L4 42z" fill="#d24629"/><text x="9" y="33" font-size="26" font-weight="bold" fill="#fff">P</text></svg></i>
      <i class="open"><svg viewBox="0 0 48 48"><path d="M4 4h34v27H4z" fill="#d9edf4"/><path d="M8 12h38v28H8z" fill="#4a99ca" stroke="#eef8fa" stroke-width="3"/><path d="M10 30q18-8 35 0v9H10z" fill="#35707c"/></svg></i>
      <i class="open"><svg viewBox="0 0 48 48"><path d="M6 4h28v10h-8v6h16v25H17V14H6z" fill="#eef1f2" stroke="#666" stroke-width="2"/><path d="M22 27h14M22 35h14M12 9h16" stroke="#596d7c" stroke-width="3"/></svg></i>
      <i class="open hot"><svg viewBox="0 0 48 48"><path d="M4 3h41v42H4z" fill="#999" stroke="#555" stroke-width="3"/><path d="M10 12l6-4v5h17V8l6 5v26H10z" fill="#fff"/></svg></i>
    </div>
    <div class="tray"><svg width="74" height="19" viewBox="1113 77 222 57" fill="none" stroke="#e7edf3" stroke-width="3"><path d="M1131 108h8l-4-5z" fill="#fff" stroke="none"/><rect x="1160" y="97" width="20" height="18" fill="#fff" stroke="#aaa"/><path d="M1205 98v20M1206 100h12v8h-12" fill="#fff"/><path d="M1240 97h10v7h-10zM1247 109h8v7h-15v-8" fill="#ddd"/><path d="M1276 100h15v11h-15zM1272 117h11v-7"/><path d="M1309 103h5l5-5v20l-5-6h-5z" fill="#fff"/><path d="M1323 102q5 6 0 11"/></svg><div class="clock"><span>09:40</span><span>19/10/2017</span></div><i class="peek"></i></div>
  </footer>
</section>
</main>
<footer class="brandbar"><span class="page">44</span><span class="brand">ARUP</span></footer>
</body>
</html>
```
FILE: styles.css
```css
* { box-sizing: border-box; }
body { margin: 0; width: 1280px; height: 720px; overflow: hidden; background: #f9f9f9; font-family: "Open Sans", "Noto Sans", sans-serif; color: #111; }
svg { display: block; flex: none; }
i, em { font-style: normal; }
.slide { height: 656px; padding: 29px 198px 0 159px; }
.brandbar { height: 64px; background: #29a9e1; color: #fff; display: flex; justify-content: space-between; align-items: center; padding: 0 27px 0 12px; }
.page { font-size: 13.500px; line-height: 16px; padding-bottom: 8px; letter-spacing: .1px; font-family: "Noto Sans", sans-serif; }
.brand { font-family: "Liberation Serif", serif; font-size: 36px; line-height: 40px; letter-spacing: -2.400px; -webkit-text-stroke: .5px #fff; }
.screen { width: 923px; height: 576px; display: flex; flex-direction: column; background: #f8f8f8; font-size: 6.2px; line-height: 8px; }

.app-head { display: flex; height: 20px; }
.app-button { width: 20px; height: 20px; background: linear-gradient(#a8aaac, #777); border: solid #5e5e5e; border-width: 0 1px 1px 0; }
.head-rows { flex: 1; }
.titlebar { height: 11px; display: flex; background: #cfd0d1; }
.quick { background: #d6d6d6; }
.caption { width: 408px; padding-left: 138px; display: flex; gap: 7px; line-height: 11px; font-size: 6px; letter-spacing: -.15px; white-space: nowrap; color: #061220; background: linear-gradient(90deg, #2e67a5, #5688ba 10%, #3a70ad 20%, #6ca4d7 27%, #78b0de 39%, #447bb2 49%, #a8c8e5 60%, #4d82b8 66%, #91badb 72%, #3470ad 76%, #94c4ed 82%, #285e9a 88%, #396fa8 96%, #b8cee0); }
.info { width: 228px; display: flex; align-items: center; background: #d1d3d5; }
.tri-right { margin-left: 2px; border: solid transparent; border-width: 2px 0 2px 3px; border-left-color: #222; }
.search { width: 86px; height: 10px; margin-left: 1px; border: 1px solid #777; background: #fff; padding-left: 1px; font-style: italic; font-size: 5.500px; letter-spacing: -.1px; line-height: 8px; color: #666; white-space: nowrap; }
.user { width: 37px; padding-left: 1px; font-size: 6px; letter-spacing: -.15px; }
.winbuttons { display: flex; height: 8px; margin-left: auto; width: 51px; border: 1px solid #486783; border-top: 0; border-radius: 0 0 3px 3px; }
.winbuttons b { display: flex; justify-content: center; align-items: center; }
.wb-min, .wb-max { background: linear-gradient(#a0bed8, #6790b8); border-right: 1px solid #486783; }
.wb-min { width: 16px; } .wb-max { width: 11px; } .wb-close { flex: 1; background: linear-gradient(#e48b73, #c74327); }
.wb-min::before { content: ""; width: 7px; height: 2px; background: #fff; }
.wb-max i { width: 5px; height: 4px; border: 1px solid #fff; }
.tabs { height: 9px; background: linear-gradient(#a2a2a2, #989898); display: flex; gap: 9px; padding-left: 6.5px; font-size: 6px; line-height: 10px; letter-spacing: -.2px; color: #1c1c1c; white-space: nowrap; }
.tabs .active { background: #f1f1f1; padding: 0 4px; margin: 0 -4px; border-radius: 2px 2px 0 0; }
.tabs svg { margin-left: 6px; }

.ribbon { height: 46px; display: flex; background: linear-gradient(#e4e4e4, #a1a1a1); border-bottom: 1px solid #999; }
.panel { display: flex; flex-direction: column; background: #f8f8f8; border-right: 1px solid #d0d0d0; }
.panel svg { width: 100%; height: 36px; font-size: 19px; }
.panel label { height: 9px; text-align: center; background: #e4e4e4; line-height: 10px; font-size: 6px; letter-spacing: -.25px; color: #333; white-space: nowrap; }
.p-select { width: 27.67px; } .p-prop { width: 31.67px; } .p-clip { width: 38px; } .p-geo { width: 69.33px; }
.p-mod { width: 114px; } .p-view { width: 30.67px; } .p-meas { width: 27.33px; } .p-create { width: 39.33px; }
.option-strip { height: 14px; background: #e0e0e0; border-bottom: 1px solid #888; }

.workarea { height: 455px; position: relative; display: flex; border-left: 1px solid #999; background: #f8f8f8; }
.cube { font: bold 6px "Open Sans", sans-serif; fill: #999; }
.cube.small { font-size: 3px; }
.vscroll { width: 8px; background: #e9e9e9; display: flex; flex-direction: column; align-items: center; }
.up, .down { border: 2px solid transparent; border-bottom-color: #444; border-top: 0; margin-top: 4px; }
.vscroll .thumb { width: 7px; height: 8px; margin-top: 217px; border: 1px solid #999; background: #ddd; }
.vscroll .down { margin-top: auto; margin-bottom: 2px; border-top: 2px solid #444; border-bottom: 0; }

.palette { position: absolute; left: 11px; top: 20px; width: 198px; height: 396px; border: 1px solid #858585; border-top-color: #b9cbdd; background: #f8f8f8; }
.pal-head { height: 10px; background: #b9cbdd; display: flex; justify-content: space-between; padding: 0 2px 0 1px; line-height: 9px; font-size: 6px; letter-spacing: -.23px; }
.pal-head b { font-size: 9px; }
.pal-type { height: 36px; display: flex; align-items: center; gap: 3px; border: 1px solid #bbb; letter-spacing: -.2px; }
.thumb-box { width: 32px; height: 32px; border: 1px solid #ddd; display: grid; place-items: center; }
.pal-type > i { margin: 0 3px 0 auto; border: 2px solid transparent; border-top-color: #222; border-bottom: 0; }
.pal-sel { height: 10px; background: #ececec; border: 1px solid #aaa; line-height: 8.500px; padding-left: 1px; letter-spacing: -.2px; }
.rows { list-style: none; margin: 0; padding: 0; }
.rows li { height: 8.635px; line-height: 8.400px; padding-left: 4px; border-bottom: 1px solid #c4c4c4; white-space: nowrap; letter-spacing: -.24px; }
.rows .group { background: #dcdcdc; padding-left: 1px; }
.rows .off { color: #888; }
.pal-help { display: block; margin: 7px 0 0 1px; color: #1c6db8; text-decoration: underline; letter-spacing: -.35px; }

.dynamo { position: absolute; left: 75.500px; top: 53.500px; width: 493px; height: 369.500px; border: 1px solid #777; border-radius: 4px; background: #f6f9fa; padding: 0 2.500px 2.500px 3.500px; box-shadow: inset 0 0 0 1px #d9e8ea, 0 0 2px #aaa; }
.dy-title { height: 14px; display: flex; align-items: center; gap: 4px; padding-left: 1.500px; background: linear-gradient(90deg, #edf5f7, #def5f5 26%, #f8f8f8 27%); font-size: 6.200px; letter-spacing: -.2px; }
.dy-win { margin: 0 3px 4px auto; width: 49px; height: 9px; display: flex; border: 1px solid #bbb; border-top: 0; border-radius: 0 0 2px 2px; }
.dy-win i { width: 13px; border-right: 1px solid #ccc; display: grid; place-items: center; }
.dy-win i:last-child { flex: 1; border: 0; }
.dy-win u { width: 6px; height: 3px; border: 1px solid #777; } .dy-win .r { width: 6px; height: 5px; background: #bbb; }
.dy-body { height: 351px; width: 485px; display: flex; flex-direction: column; background: #2e2e2e; }
.dy-menu { height: 13px; display: flex; align-items: center; padding-left: 8px; color: #bbb; font-size: 5.800px; letter-spacing: -.15px; border-bottom: 1px solid #3b3b3b; }
.dy-menu span:not(:last-of-type) { margin-right: 15px; }
.dy-menu b { width: 8px; height: 8px; margin-left: 15px; background: #ddd; color: #333; border-radius: 50%; text-align: center; line-height: 8px; }
.dy-menu em { width: 7px; height: 7px; margin-left: -1px; background: #72cd7d; border-radius: 50%; }
.dy-tools { height: 15px; }
.dy-tabs { height: 9.500px; background: #1c1c1c; display: flex; justify-content: space-between; align-items: center; padding-right: 2px; }
.dy-tab { width: 121px; background: #2e2e2e; display: flex; justify-content: space-between; align-items: center; padding: 0 3px 0 4.500px; color: #ddd; font-size: 5.900px; font-weight: 600; letter-spacing: -.05px; white-space: nowrap; line-height: 9.500px; }
.dy-tabs > i { width: 5px; height: 5px; border: solid #999; border-width: 1px 0; background: linear-gradient(transparent 1px, #999 1px 2px, transparent 2px); }
.dy-space { height: 290px; position: relative; background: #f8f8f8; }
.library { position: absolute; left: 0; top: 10px; width: 10px; height: 38px; background: #191919; color: #ccc; writing-mode: vertical-rl; transform: rotate(180deg); font-size: 6.500px; letter-spacing: -.1px; line-height: 10px; display: flex; align-items: center; gap: 3px; padding-top: 5px; }
.dy-run { flex: 1; background: #141414; display: flex; align-items: center; padding-left: 1px; gap: 1px; color: #bbb; font-size: 6.900px; }
.mode, .run { height: 19px; line-height: 18px; background: #262626; }
.mode { width: 60px; display: flex; justify-content: space-between; align-items: center; padding: 0 6px 0 5px; }
.mode i { border: 2px solid transparent; border-top-color: #aaa; border-bottom: 0; }
.run { width: 48px; text-align: center; padding-right: 1px; line-height: 19px; }
.dy-run svg { margin: auto 0 0 auto; }
.note { fill: #e8e8e8; stroke: #ddd; }
.node { fill: #cbc1b8; stroke: #8f8983; stroke-width: 2; }
.head, .headone { fill: #fff; font-size: 11px; font-weight: 700; }
.port { fill: #5c5a56; font-size: 10px; }
.tiny { fill: #777; font-size: 9px; } .dark { fill: #554f48; }
.wire { fill: none; stroke: #444; stroke-width: 3; }

.viewbar { height: 10px; display: flex; align-items: center; border-left: 1px solid #999; }
.viewbar > span { width: 34px; padding-left: 12px; white-space: nowrap; font-size: 5.500px; letter-spacing: -.1px; }
.viewbar > svg { margin-left: 5px; }
.hscroll { flex: 1; height: 8px; background: #eaeaea; display: flex; align-items: center; justify-content: flex-end; }
.hscroll i { width: 8px; height: 6px; border: 1px solid #999; background: #ddd; margin-right: 359px; }
.hscroll b { border: 2px solid transparent; border-left-color: #444; border-right: 0; margin-right: 12px; }
.status { height: 12px; display: flex; align-items: center; background: linear-gradient(#cfcfcf, #e2e2e2 15%, #c6c6c6); }
.status p { margin: 0; width: 433px; padding-left: 1px; font-size: 6.100px; letter-spacing: -.28px; }
.box { height: 9px; background: #f8f8f8; border: 1px solid #ccc; display: flex; justify-content: space-between; align-items: center; color: #999; padding: 0 2px; font-size: 6px; letter-spacing: -.1px; }
.box i { margin-left: auto; border: 2px solid transparent; border-top-color: #777; border-bottom: 0; }
.b1 { width: 100px; } .b2 { width: 99px; margin-left: 1px; }
.sel { margin-left: auto; margin-right: 28px; }

.taskbar { height: 19px; display: flex; background: linear-gradient(90deg, #1c64a2, #2681ca 18%, #1b7fd0 40%, #1472c2 70%, #1d588e); border-top: 1px solid #607d96; }
.start { width: 28px; padding-left: 3px; }
.tasks { display: flex; width: 774px; }
.tasks > i { width: 24.200px; display: grid; place-items: center; }
.tasks svg { width: 16px; height: 16px; }
.tasks .open { background: linear-gradient(135deg, #99c9ea99, #5ba2d955); border: 1px solid #b0d5ef88; border-radius: 1px; }
.tasks .hot { background: #b5d7ecaa; }
.ico { font-size: 40px; font-weight: 700; } .ico.sm { font-size: 32px; }
.tray { display: flex; flex: 1; background: #184b7c; }
.clock { width: 41px; display: flex; flex-direction: column; align-items: center; color: #fff; font-size: 5.800px; letter-spacing: -.2px; line-height: 8px; padding-top: 1px; }
.peek { flex: 1; border-left: 1px solid #0c3156; background: #245988; }
```
